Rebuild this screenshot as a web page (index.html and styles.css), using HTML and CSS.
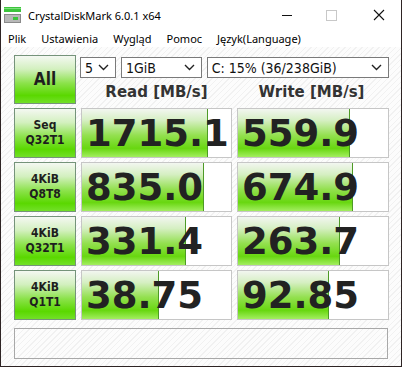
FILE: index.html
```html
<!DOCTYPE html>
<html lang="pl">
<head>
  <meta charset="UTF-8">
  <title>CrystalDiskMark 6.0.1 x64</title>
  <meta name="viewport" content="width=device-width, initial-scale=1.0">
  <link rel="stylesheet" href="styles.css">
</head>
<body>

<div class="window">
  <header class="titlebar">
    <svg class="app-icon" width="20" height="17" viewBox="0 0 20 17">
      <rect x="0" y="0" width="17" height="5" fill="#3cc43c"/>
      <rect x="0" y="1" width="17" height="1" fill="#7ee07e"/>
      <rect x="0" y="7" width="17" height="9" fill="#8a8a8a"/>
      <rect x="1" y="8" width="15" height="7" fill="#b8b8b8"/>
      <rect x="9" y="10" width="5" height="3" fill="#3cc43c"/>
    </svg>
    <span class="title">CrystalDiskMark 6.0.1 x64</span>
    <div class="controls">
      <span class="ctl-min"></span>
      <span class="ctl-max"></span>
      <svg class="ctl-close" width="12" height="12" viewBox="0 0 12 12">
        <path d="M1 1 L11 11 M11 1 L1 11" stroke="#111" stroke-width="1.1"/>
      </svg>
    </div>
  </header>

  <nav class="menubar">
    <span>Plik</span>
    <span>Ustawienia</span>
    <span>Wygląd</span>
    <span>Pomoc</span>
    <span>Język(Language)</span>
  </nav>

  <main class="content">
    <div class="grid">
      <div class="label-btn all">All</div>
      <div class="top-right">
        <div class="selects">
          <div class="select sel-count">5 <svg width="11" height="7" viewBox="0 0 11 7"><path d="M1 1 L5.5 5.5 L10 1" fill="none" stroke="#222" stroke-width="1.4"/></svg></div>
          <div class="select sel-size">1GiB <svg width="11" height="7" viewBox="0 0 11 7"><path d="M1 1 L5.5 5.5 L10 1" fill="none" stroke="#222" stroke-width="1.4"/></svg></div>
          <div class="select sel-drive">C: 15% (36/238GiB) <svg width="11" height="7" viewBox="0 0 11 7"><path d="M1 1 L5.5 5.5 L10 1" fill="none" stroke="#222" stroke-width="1.4"/></svg></div>
        </div>
        <div class="heads">
          <div class="head">Read [MB/s]</div>
          <div class="head">Write [MB/s]</div>
        </div>
      </div>

      <div class="label-btn">Seq<br>Q32T1</div>
      <div class="value"><div class="bar" style="width:84%"></div><span>1715.1</span></div>
      <div class="value"><div class="bar" style="width:74%"></div><span>559.9</span></div>

      <div class="label-btn">4KiB<br>Q8T8</div>
      <div class="value"><div class="bar" style="width:81%"></div><span>835.0</span></div>
      <div class="value"><div class="bar" style="width:76%"></div><span>674.9</span></div>

      <div class="label-btn">4KiB<br>Q32T1</div>
      <div class="value"><div class="bar" style="width:69%"></div><span>331.4</span></div>
      <div class="value"><div class="bar" style="width:67%"></div><span>263.7</span></div>

      <div class="label-btn">4KiB<br>Q1T1</div>
      <div class="value"><div class="bar" style="width:51%"></div><span>38.75</span></div>
      <div class="value"><div class="bar" style="width:60%"></div><span>92.85</span></div>
    </div>
    <div class="comment"></div>
  </main>
</div>

</body>
</html>
```

FILE: styles.css
```css
body { margin: 0; background: #fff; }
.window {
  width: 402px; height: 367px; box-sizing: border-box;
  border: 1px solid #2e2424; border-top: none;
  display: flex; flex-direction: column;
  font-family: "Noto Sans", "DejaVu Sans", sans-serif; color: #000;
}
.titlebar { height: 30px; display: flex; align-items: center; background: #fff; }
.app-icon { margin: 0 4px 0 3px; }
.title { font-size: 11px; }
.controls { margin-left: auto; display: flex; align-items: center; }
.ctl-min { width: 10px; height: 1px; background: #111; margin-right: 34px; }
.ctl-max { width: 9px; height: 9px; border: 1px solid #c8c8c8; margin-right: 36px; }
.ctl-close { margin-right: 16px; }

.menubar { height: 17px; display: flex; align-items: center; padding-left: 7px; font-size: 11px; background: #fff; }
.menubar span { line-height: 16px; margin-right: 15px; }

.content {
  flex: 1; padding: 8px 0 0 13px;
  background: repeating-linear-gradient(135deg, #fcfcfc 0 3px, #f1f1f1 3px 4px);
  font-family: "DejaVu Sans Condensed", "DejaVu Sans", sans-serif; font-stretch: condensed;
}
.grid {
  display: grid; grid-template-columns: 62px 151px 152px;
  grid-template-rows: 49px repeat(4, 50px);
  column-gap: 5px; row-gap: 4px;
}
.label-btn {
  box-sizing: border-box; border: 1px solid #75937a;
  background: linear-gradient(#f4f8f2 0%, #d3f0bf 28%, #8be24a 58%, #5ad800 84%, #72e028 100%);
  display: flex; align-items: center; justify-content: center; text-align: center;
  font-weight: bold; font-size: 12px; line-height: 15px; color: #1e1e1e;
}
.label-btn.all { font-size: 17px; }
.top-right { grid-column: 2 / 4; display: flex; flex-direction: column; margin-left: -1px; }
.selects { display: flex; gap: 5px; margin-top: 2px; }
.select {
  box-sizing: border-box; height: 21px; border: 1px solid #7a7a7a; background: #fff;
  display: flex; align-items: center; justify-content: space-between;
  padding: 0 6px 0 4px; font-size: 14px; color: #111;
}
.sel-count { width: 36px; }
.sel-size { width: 81px; }
.sel-drive { width: 183px; }
.heads { display: flex; flex: 1; align-items: center; gap: 4px; padding-top: 2px; margin-left: 1px; }
.head { width: 151px; text-align: center; font-weight: bold; font-size: 15px; color: #333; font-stretch: normal; font-family: "DejaVu Sans", sans-serif; }
.value {
  position: relative; box-sizing: border-box; border: 1px solid #c6c6c6; background: #fff;
  display: flex; align-items: center; overflow: hidden;
}
.bar {
  position: absolute; left: 0; top: 0; bottom: 0;
  border-right: 1px solid #4d9a26;
  background: linear-gradient(#f2f6f0 0%, #d5efc2 24%, #93e04f 55%, #68d710 82%, #a3ee60 100%);
}
.value span {
  position: relative; padding-left: 4px; font-weight: bold; font-size: 37px;
  font-family: "DejaVu Sans", sans-serif; font-stretch: normal;
  color: #222; line-height: 1;
}
.comment {
  box-sizing: border-box; width: 374px; height: 31px; margin-top: 8px;
  border: 1px solid #a8a8a8; background: transparent;
}
```
